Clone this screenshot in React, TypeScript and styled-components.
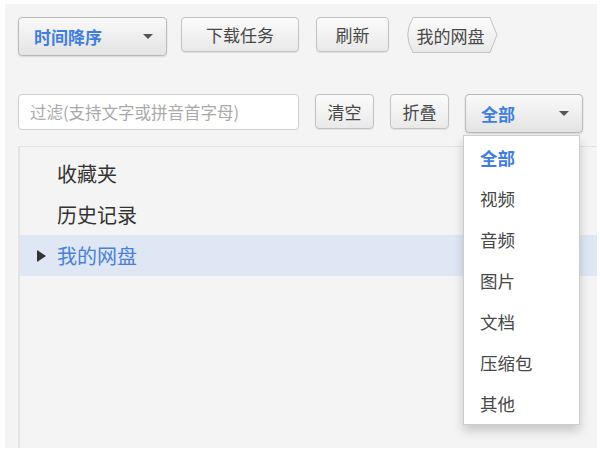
import React, { useState } from 'react';
import styled, { createGlobalStyle } from 'styled-components';

const GlobalStyle = createGlobalStyle`
  html, body {
    margin: 0;
    padding: 0;
    background: #ffffff;
  }
  body {
    font-family: "Noto Sans CJK SC", "Noto Sans", "Liberation Sans", sans-serif;
  }
`;

const Page = styled.div`
  width: 600px;
  height: 452px;
  box-sizing: border-box;
  padding: 4px 3px 4px 5px;
  background: #ffffff;
`;

const Panel = styled.div`
  position: relative;
  height: 100%;
  box-sizing: border-box;
  background: #f4f4f4;
  padding: 13px 0 0 13px;
  display: flex;
  flex-direction: column;
`;

const Toolbar = styled.div<{ $mt?: number }>`
  display: flex;
  align-items: flex-start;
  margin-top: ${({ $mt }) => $mt ?? 0}px;
`;

const Button = styled.button<{ $w: number; $ml?: number }>`
  width: ${({ $w }) => $w}px;
  height: 35px;
  margin-left: ${({ $ml }) => $ml ?? 0}px;
  box-sizing: border-box;
  border: 1px solid #c2c2c2;
  border-radius: 4px;
  background: linear-gradient(#fbfbfb, #e9e9e9);
  box-shadow: 0 1px 1px rgba(0, 0, 0, 0.08);
  color: #484848;
  font-family: inherit;
  font-size: 17px;
  padding: 0;
  line-height: 33px;
  cursor: pointer;
`;

const Select = styled.div<{ $w: number; $ml?: number; $pl: number }>`
  position: relative;
  width: ${({ $w }) => $w}px;
  height: 39px;
  margin-left: ${({ $ml }) => $ml ?? 0}px;
  box-sizing: border-box;
  border: 1px solid #b8b8b8;
  border-radius: 4px;
  background: linear-gradient(#f9f9f9, #e4e4e4);
  box-shadow: 0 1px 2px rgba(0, 0, 0, 0.12);
  display: flex;
  align-items: center;
  justify-content: space-between;
  padding: 0 13px 0 ${({ $pl }) => $pl}px;
  color: #3f7ee0;
  font-size: 17px;
  font-weight: bold;
  cursor: pointer;
`;

const Caret = styled.span`
  width: 0;
  height: 0;
  border-left: 5px solid transparent;
  border-right: 5px solid transparent;
  border-top: 5px solid #555;
`;

const Crumb = styled.div`
  position: relative;
  width: 93px;
  height: 36px;
  margin-left: 16px;
  display: flex;
  align-items: center;
  justify-content: center;
  color: #484848;
  font-size: 17px;
  padding-right: 2px;
  box-sizing: border-box;
`;

const CrumbShape = styled.svg`
  position: absolute;
  inset: 0;
  z-index: 0;
`;

const CrumbLabel = styled.span`
  position: relative;
  z-index: 1;
`;

const FilterInput = styled.input`
  width: 281px;
  height: 36px;
  box-sizing: border-box;
  border: 1px solid #cfcfcf;
  border-radius: 4px;
  background: #fff;
  padding: 0 11px;
  font-family: inherit;
  font-size: 16.5px;
  color: #333;
  outline: none;
  &::placeholder {
    color: #a9a9a9;
  }
`;

const Tree = styled.div`
  flex: 1;
  margin-top: 13px;
  border-top: 1px solid #e2e2e2;
  border-left: 2px solid #e4e4e4;
  padding-top: 6px;
`;

const TreeItem = styled.div<{ $active?: boolean }>`
  height: 41px;
  display: flex;
  align-items: center;
  padding-left: ${({ $active }) => ($active ? 17 : 37)}px;
  background: ${({ $active }) => ($active ? '#dfe7f5' : 'transparent')};
  color: ${({ $active }) => ($active ? '#4b80d6' : '#333')};
  font-size: 20px;
  cursor: pointer;
`;

const Arrow = styled.span`
  width: 0;
  height: 0;
  border-top: 6px solid transparent;
  border-bottom: 6px solid transparent;
  border-left: 9px solid #333;
  margin-right: 11px;
`;

const Menu = styled.ul`
  position: absolute;
  left: 458px;
  top: 131px;
  width: 117px;
  margin: 0;
  padding: 1px 0 0;
  list-style: none;
  box-sizing: border-box;
  background: #fff;
  border: 1px solid #cdcdcd;
  box-shadow: 0 6px 10px rgba(0, 0, 0, 0.18);
  z-index: 10;
`;

const MenuItem = styled.li<{ $selected?: boolean }>`
  height: 41px;
  display: flex;
  align-items: center;
  padding-left: 16px;
  font-size: 17.5px;
  color: ${({ $selected }) => ($selected ? '#3f7ee0' : '#484848')};
  font-weight: ${({ $selected }) => ($selected ? 'bold' : 'normal')};
  cursor: pointer;
`;

const types = ['全部', '视频', '音频', '图片', '文档', '压缩包', '其他'];

export default function App() {
  const [type, setType] = useState('全部');
  const [filter, setFilter] = useState('');

  return (
    <Page>
      <GlobalStyle />
      <Panel>
        <Toolbar>
          <Select $w={149} $pl={15}>
            时间降序
            <Caret />
          </Select>
          <Button $w={118} $ml={14}>下载任务</Button>
          <Button $w={73} $ml={17}>刷新</Button>
          <Crumb>
            <CrumbShape width="93" height="36" viewBox="0 0 93 36">
              <defs>
                <linearGradient id="crumbFill" x1="0" y1="0" x2="0" y2="1">
                  <stop offset="0" stopColor="#fbfbfb" />
                  <stop offset="1" stopColor="#e9e9e9" />
                </linearGradient>
              </defs>
              <path
                d="M8 0.5 H85 L92 18 L85 35.5 H8 Q-2.5 18 8 0.5 Z"
                fill="url(#crumbFill)"
                stroke="#c2c2c2"
                strokeWidth="1"
              />
            </CrumbShape>
            <CrumbLabel>我的网盘</CrumbLabel>
          </Crumb>
        </Toolbar>

        <Toolbar $mt={38}>
          <FilterInput
            placeholder="过滤(支持文字或拼音首字母)"
            value={filter}
            onChange={(e) => setFilter(e.target.value)}
          />
          <Button $w={59} $ml={16}>清空</Button>
          <Button $w={59} $ml={16}>折叠</Button>
          <Select $w={118} $ml={16} $pl={15}>
            {type}
            <Caret />
          </Select>
        </Toolbar>

        <Tree>
          <TreeItem>收藏夹</TreeItem>
          <TreeItem>历史记录</TreeItem>
          <TreeItem $active>
            <Arrow />
            我的网盘
          </TreeItem>
        </Tree>

        <Menu>
          {types.map((t) => (
            <MenuItem key={t} $selected={t === type} onClick={() => setType(t)}>
              {t}
            </MenuItem>
          ))}
        </Menu>
      </Panel>
    </Page>
  );
}
